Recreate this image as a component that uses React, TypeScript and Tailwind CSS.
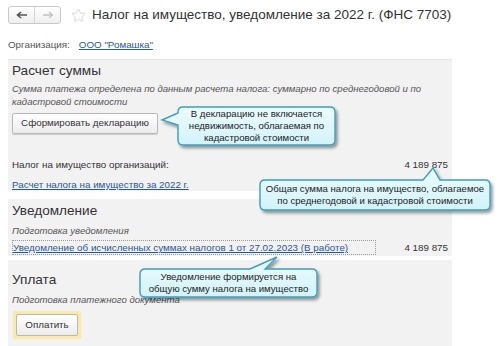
import { Star } from "lucide-react";

interface CalloutProps {
  id: string;
  box: string;
  width: number;
  height: number;
  path: string;
  textBox: string;
  lines: string[];
}

function Callout({ id, box, width, height, path, textBox, lines }: CalloutProps) {
  return (
    <div className={`absolute ${box}`}>
      <svg width={width} height={height} className="block overflow-visible">
        <defs>
          <linearGradient id={`${id}-g`} x1="0" y1="0" x2="0" y2="1">
            <stop offset="0" stopColor="#ecfcff" />
            <stop offset="1" stopColor="#d2f3fa" />
          </linearGradient>
          <filter id={`${id}-s`} x="-10%" y="-20%" width="130%" height="150%">
            <feDropShadow dx="2" dy="2.5" stdDeviation="1.4" floodColor="#000" floodOpacity="0.4" />
          </filter>
        </defs>
        <path d={path} fill={`url(#${id}-g)`} stroke="#3c9fbb" strokeWidth="1.4" filter={`url(#${id}-s)`} />
      </svg>
      <div className={`absolute ${textBox} flex flex-col items-center justify-center text-center text-[9.6px] leading-[12px] text-[#222]`}>
        {lines.map((l) => (
          <span key={l} className="whitespace-nowrap">{l}</span>
        ))}
      </div>
    </div>
  );
}

export default function App() {
  return (
    <div className="relative w-[500px] h-[346px] overflow-hidden bg-white font-['Liberation_Sans',Arial,sans-serif] text-[#333]">
      {/* шапка */}
      <div className="flex items-center h-[29px] pl-[8px] pt-[1px]">
        <div className="flex h-[18px] rounded-[3px] border border-[#c9c9c9] bg-gradient-to-b from-white to-[#efefef]">
          <div className="w-[26px] flex items-center justify-center border-r border-[#d4d4d4]">
            <svg width="12" height="8" viewBox="0 0 12 8">
              <path d="M11 4H2.5M5 1L1.5 4L5 7" fill="none" stroke="#555" strokeWidth="1.6" />
            </svg>
          </div>
          <div className="w-[25px] flex items-center justify-center">
            <svg width="12" height="8" viewBox="0 0 12 8">
              <path d="M1 4H9.5M7 1L10.5 4L7 7" fill="none" stroke="#c2c2c2" strokeWidth="1.3" />
            </svg>
          </div>
        </div>
        <Star size={15} strokeWidth={1.2} className="ml-[10px] text-[#c8c8c8]" />
        <h1 className="ml-[6px] text-[13.5px] leading-[18px] text-[#333] whitespace-nowrap">
          Налог на имущество, уведомление за 2022 г. (ФНС 7703)
        </h1>
      </div>

      <div className="flex items-center h-[30px] pl-[8px] pt-[2px] text-[9.8px]">
        <span className="text-[#555]">Организация:</span>
        <span className="ml-[9px] text-[#2557a7] underline">ООО "Ромашка"</span>
      </div>

      <div className="w-[444px] ml-[8px] flex flex-col border-t border-[#e4e4e4]">
        {/* Расчет суммы */}
        <section className="bg-[#f2f2f2] h-[131px] px-[4px] pt-[1px]">
          <h2 className="text-[13.6px] leading-[20px]">Расчет суммы</h2>
          <p className="mt-[1px] italic text-[9.6px] leading-[13px] text-[#555]">
            Сумма платежа определена по данным расчета налога: суммарно по среднегодовой и по кадастровой стоимости
          </p>
          <button className="mt-[5px] h-[21px] w-[146px] rounded-[2px] border border-[#b8b8b8] bg-gradient-to-b from-white to-[#ececec] text-[9.8px] text-[#333] shadow-[0_1px_1px_rgba(0,0,0,0.15)]">
            Сформировать декларацию
          </button>
          <div className="mt-[24px] flex justify-between text-[9.8px] leading-[14px]">
            <span>Налог на имущество организаций:</span>
            <span>4 189 875</span>
          </div>
          <div className="mt-[6px] text-[9.8px] leading-[14px] text-[#2557a7] underline">
            Расчет налога на имущество за 2022 г.
          </div>
        </section>

        {/* Уведомление */}
        <section className="mt-[8px] bg-[#f2f2f2] h-[57px] px-[4px] pt-[2px]">
          <h2 className="text-[13.6px] leading-[20px]">Уведомление</h2>
          <p className="mt-[3px] italic text-[9.6px] leading-[13px] text-[#555]">Подготовка уведомления</p>
          <div className="mt-[3px] flex items-center justify-between text-[9.8px] leading-[13px]">
            <span className="border border-dotted border-[#9a9a9a] w-[364px] text-[#2557a7] underline whitespace-nowrap">
              Уведомление об исчисленных суммах налогов 1 от 27.02.2023 (В работе)
            </span>
            <span>4 189 875</span>
          </div>
        </section>

        {/* Уплата */}
        <section className="mt-[4px] bg-[#f2f2f2] h-[90px] px-[4px] pt-[10px]">
          <h2 className="text-[13.6px] leading-[20px]">Уплата</h2>
          <p className="mt-[3px] italic text-[9.6px] leading-[13px] text-[#555]">Подготовка платежного документа</p>
          <div className="mt-[5px] ml-[1px] inline-flex p-[3px] bg-[#fbe9a6] rounded-[2px]">
            <button className="h-[22px] w-[62px] rounded-[2px] border border-[#b8b8b8] bg-gradient-to-b from-white to-[#ececec] text-[9.8px] text-[#333]">
              Оплатить
            </button>
          </div>
        </section>
      </div>

      <Callout
        id="c1"
        box="left-[158px] top-[103px]"
        width={185}
        height={50}
        path="M25,4 H172 Q177,4 177,9 V37 Q177,42 172,42 H25 Q20,42 20,37 V22 L4,17 L20,10 V9 Q20,4 25,4 Z"
        textBox="left-[20px] top-[4px] w-[157px] h-[38px]"
        lines={["В декларацию не включается", "недвижимость, облагаемая по", "кадастровой стоимости"]}
      />
      <Callout
        id="c2"
        box="left-[255px] top-[164px]"
        width={242}
        height={52}
        path="M10,16 H168 L178,4 L185,16 H230 Q235,16 235,21 V41 Q235,46 230,46 H10 Q5,46 5,41 V21 Q5,16 10,16 Z"
        textBox="left-[5px] top-[16px] w-[230px] h-[30px]"
        lines={["Общая сумма налога на имущество, облагаемое", "по среднегодовой и кадастровой стоимости"]}
      />
      <Callout
        id="c3"
        box="left-[135px] top-[253px]"
        width={190}
        height={50}
        path="M10,16 H115 L142,4 L130,16 H177 Q182,16 182,21 V39 Q182,44 177,44 H10 Q5,44 5,39 V21 Q5,16 10,16 Z"
        textBox="left-[5px] top-[16px] w-[177px] h-[28px]"
        lines={["Уведомление формируется на", "общую сумму налога на имущество"]}
      />
    </div>
  );
}
